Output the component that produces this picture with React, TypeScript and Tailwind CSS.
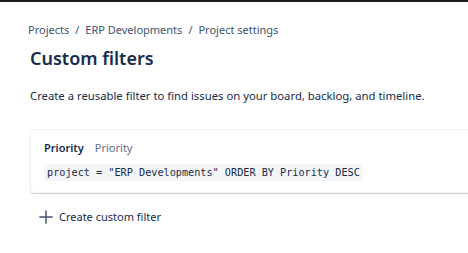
import React from "react";

export default function App() {
  return (
    <div className="w-[468px] h-[253px] bg-white overflow-hidden border-t-2 border-[#1d1d1d]" style={{ fontFamily: '"Noto Sans", sans-serif' }}>
      <div className="pl-[28px] pt-[20px]">
        <div className="flex items-center text-[11px] text-[#42526e] leading-[16px] gap-[6px]">
          <span>Projects</span>
          <span>/</span>
          <span>ERP Developments</span>
          <span>/</span>
          <span>Project settings</span>
        </div>
      </div>
      <div className="pl-[30px]">
        <h1 className="mt-[8px] text-[18px] leading-[24px] font-semibold text-[#172b4d]">Custom filters</h1>
        <p className="mt-[18px] text-[11.3px] leading-[16px] text-[#172b4d]">
          Create a reusable filter to find issues on your board, backlog, and timeline.
        </p>
        <div className="mt-[25px] -mr-[10px] rounded-[4px] border border-[#f0f1f3] shadow-[0_1px_1px_rgba(9,30,66,0.2)] pl-[13px] pt-[10px] pb-[10px]">
          <div className="flex items-baseline gap-[11px] text-[11px] leading-[16px]">
            <span className="font-semibold text-[#172b4d]">Priority</span>
            <span className="text-[#5e6c84]">Priority</span>
          </div>
          <div className="mt-[2px]">
            <code className="inline-block bg-[#f4f5f7] rounded-[2px] px-[3px] text-[10.2px] leading-[17px] text-[#172b4d]" style={{ fontFamily: '"DejaVu Sans Mono", monospace' }}>
              project = "ERP Developments" ORDER BY Priority DESC
            </code>
          </div>
        </div>
        <button className="mt-[16px] flex items-center gap-[6px] pl-[9px] text-[11px] leading-[16px] text-[#172b4d]">
          <svg width="14" height="14" viewBox="0 0 16 16" fill="none">
            <path d="M8 1v14M1 8h14" stroke="#42526e" strokeWidth="1.7" strokeLinecap="round" />
          </svg>
          <span>Create custom filter</span>
        </button>
      </div>
    </div>
  );
}
